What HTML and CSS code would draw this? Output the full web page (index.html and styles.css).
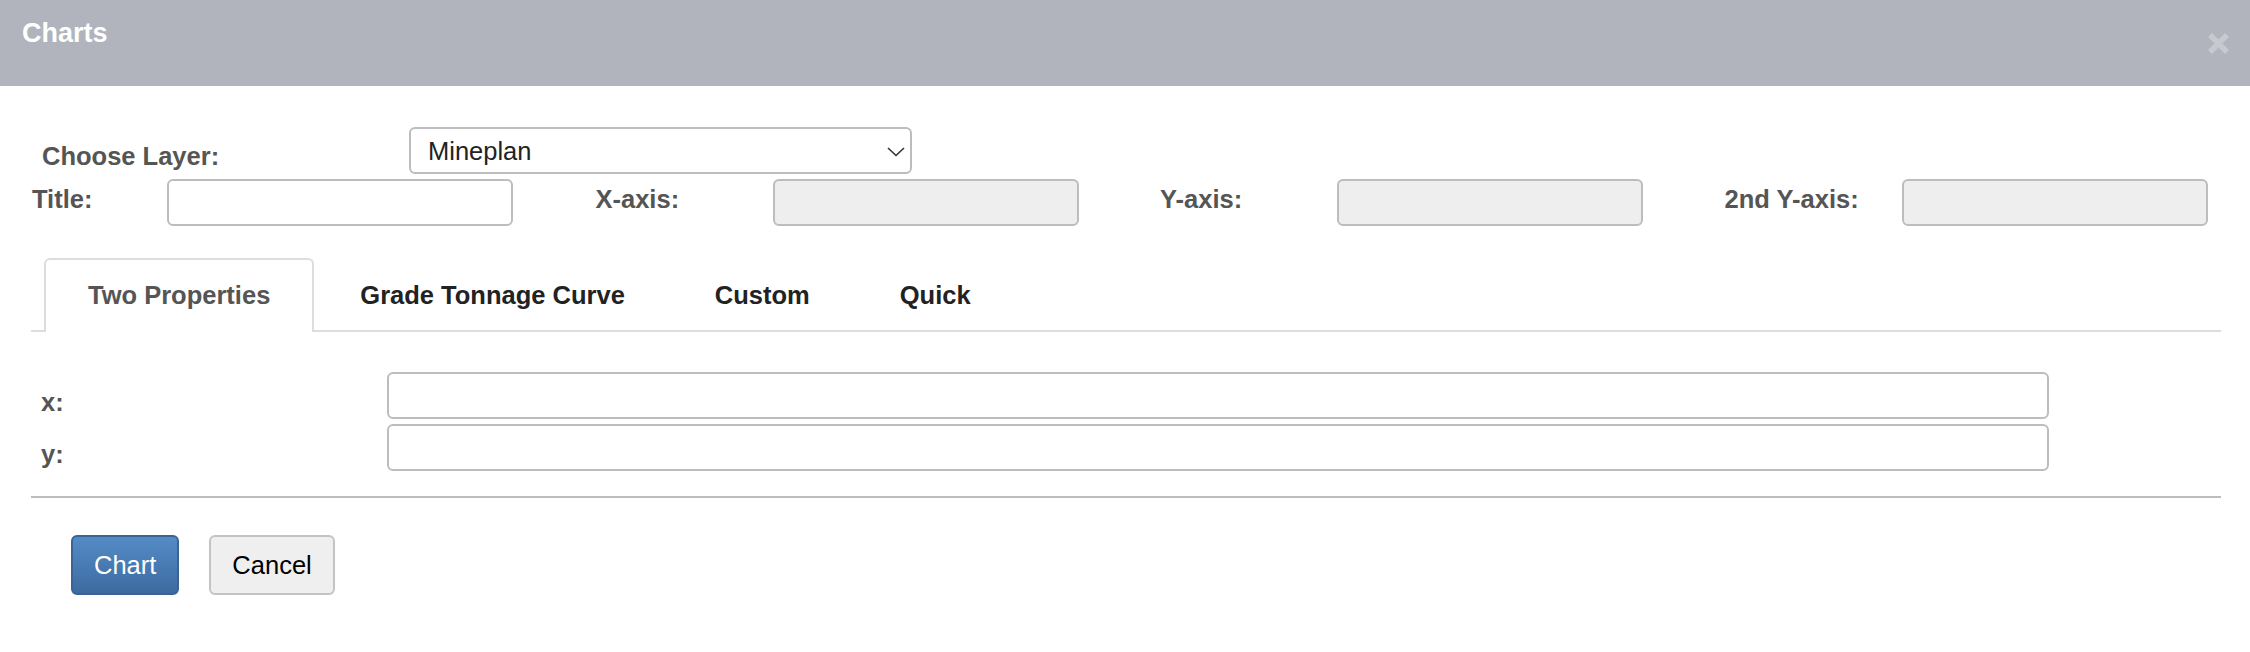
FILE: index.html
```html
<!DOCTYPE html>
<html lang="en">

<head>
    <meta charset="UTF-8">
    <meta name="viewport" content="width=device-width, initial-scale=1.0">
    <title>Charts</title>
    <link rel="stylesheet" href="styles.css">
</head>

<body>
    <div class="modal">
        <div class="modal-header">
            <h3 class="modal-title">Charts</h3>
            <span class="close">
                <svg width="23" height="23" viewBox="0 0 23 23">
                    <path d="M3 3 L20 20 M20 3 L3 20" stroke="#c6c9d0" stroke-width="5.5" fill="none" />
                </svg>
            </span>
        </div>

        <div class="modal-body">
            <div class="layer-row">
                <label class="layer-label" for="layer">Choose Layer:</label>
                <div class="select-wrap">
                    <select id="layer" class="layer-select">
                        <option>Mineplan</option>
                    </select>
                    <svg class="chevron" width="18" height="10" viewBox="0 0 18 10">
                        <path d="M1 1 L9 8.5 L17 1" stroke="#333" stroke-width="1.6" fill="none" />
                    </svg>
                </div>
            </div>

            <div class="axis-row">
                <div class="field">
                    <label class="lbl lbl-first">Title:</label>
                    <input type="text" class="txt txt-title">
                </div>
                <div class="field">
                    <label class="lbl">X-axis:</label>
                    <input type="text" class="txt txt-axis" disabled>
                </div>
                <div class="field">
                    <label class="lbl">Y-axis:</label>
                    <input type="text" class="txt txt-axis" disabled>
                </div>
                <div class="field">
                    <label class="lbl">2nd Y-axis:</label>
                    <input type="text" class="txt txt-axis" disabled>
                </div>
            </div>

            <ul class="tabs">
                <li class="tab active">Two Properties</li>
                <li class="tab">Grade Tonnage Curve</li>
                <li class="tab">Custom</li>
                <li class="tab">Quick</li>
            </ul>

            <div class="tab-pane">
                <div class="prop-row">
                    <label class="prop-lbl">x:</label>
                    <input type="text" class="txt txt-prop">
                </div>
                <div class="prop-row">
                    <label class="prop-lbl">y:</label>
                    <input type="text" class="txt txt-prop">
                </div>
            </div>

            <div class="modal-footer">
                <button class="btn btn-primary">Chart</button>
                <button class="btn btn-default">Cancel</button>
            </div>
        </div>
    </div>
</body>

</html>
```

FILE: styles.css
```css
* {
    margin: 0px;
    padding: 0px;
    box-sizing: border-box;
}

body {
    font-family: "Liberation Sans", Arial, sans-serif;
    background-color: #fff;
}

/* header bar */
.modal-header {
    height: 86px;
    background-color: #b1b4bc;
    display: flex;
    justify-content: space-between;
    align-items: flex-start;
}

.modal-title {
    font-size: 27px;
    font-weight: bold;
    line-height: 1;
    color: #fff;
    padding: 20px 0 0 22px;
}

.close {
    display: block;
    margin: 32px 20px 0 0;
    height: 23px;
}

.close svg {
    display: block;
}

/* body */
.modal-body {
    padding: 0 29px 0 31px;
}

.layer-row {
    margin-top: 41px;
    display: flex;
    align-items: center;
}

.layer-label {
    width: 378px;
    padding: 12px 0 0 11px;
    font-size: 25.5px;
    font-weight: bold;
    color: #555;
}

.select-wrap {
    position: relative;
    width: 503px;
    height: 47px;
}

.layer-select {
    appearance: none;
    -webkit-appearance: none;
    width: 100%;
    height: 100%;
    border: 2px solid #bdbdbd;
    border-radius: 6px;
    background-color: #fff;
    padding: 0 17px;
    font-family: "Liberation Sans", Arial, sans-serif;
    font-size: 25.5px;
    color: #222;
}

.chevron {
    position: absolute;
    right: 7px;
    top: 20px;
    pointer-events: none;
}

.axis-row {
    margin-top: 5px;
    display: grid;
    grid-template-columns: 564.5px 564.5px 564.5px auto;
}

.field {
    display: flex;
    align-items: center;
}

.lbl {
    width: 177px;
    padding-bottom: 6px;
    font-size: 25.5px;
    font-weight: bold;
    color: #555;
}

.lbl-first {
    width: 136px;
    padding-left: 1px;
}

.txt {
    height: 47px;
    border: 2px solid #bdbdbd;
    border-radius: 6px;
    background-color: #fff;
    font-size: 25.5px;
    padding: 0 12px;
}

.txt-title {
    width: 346px;
}

.txt-axis {
    width: 306px;
    background-color: #eeeeee;
}

/* tabs */
.tabs {
    list-style: none;
    margin-top: 32px;
    padding-left: 13px;
    display: flex;
    border-bottom: 2px solid #dddddd;
}

.tab {
    height: 74px;
    margin-bottom: -2px;
    margin-right: 2px;
    padding: 0 42px 2px;
    display: flex;
    align-items: center;
    font-size: 25.5px;
    font-weight: bold;
    color: #222;
    border: 2px solid transparent;
    border-bottom: 0;
    border-radius: 6px 6px 0 0;
}

.tab.active {
    color: #555;
    background-color: #fff;
    border-color: #dddddd;
}

.tab-pane {
    padding-top: 40px;
}

.prop-row {
    display: flex;
    align-items: center;
}

.prop-row + .prop-row {
    margin-top: 5px;
}

.prop-lbl {
    width: 356px;
    padding: 13px 0 0 10px;
    font-size: 25.5px;
    font-weight: bold;
    color: #555;
}

.txt-prop {
    width: 1662px;
}

/* footer */
.modal-footer {
    margin-top: 25px;
    border-top: 2px solid #bdbdbd;
    padding: 37px 0 0 40px;
    display: flex;
    gap: 30px;
}

.btn {
    height: 60px;
    padding: 0 21px;
    font-family: "Liberation Sans", Arial, sans-serif;
    font-size: 25.5px;
    border-radius: 6px;
    cursor: pointer;
}

.btn-primary {
    color: #fff;
    background: linear-gradient(#548bc6, #3d6ba0);
    border: 2px solid #3a6494;
}

.btn-default {
    color: #000;
    background-color: #efefef;
    border: 2px solid #c3c3c3;
}
```
